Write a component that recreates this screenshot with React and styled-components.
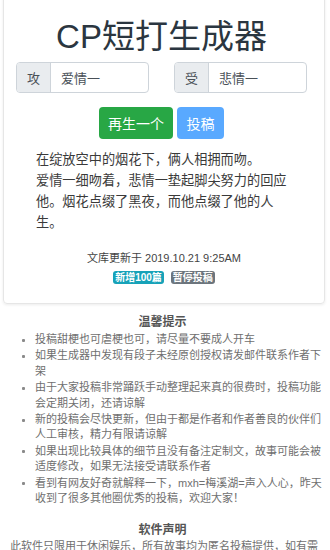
import React from 'react'
import styled, { createGlobalStyle } from 'styled-components'

const GlobalStyle = createGlobalStyle`
  html, body {
    margin: 0;
    padding: 0;
    background: #fff;
    font-family: "Liberation Sans", "Noto Sans CJK SC", sans-serif;
    overflow: hidden;
  }
`

const Page = styled.div`
  width: 330px;
  height: 550px;
  overflow: hidden;
  box-sizing: border-box;
  padding: 0 5px 0 3px;
`

const Card = styled.div`
  margin-top: -6px;
  border: 1px solid #e6e6e6;
  border-radius: 4px;
  box-shadow: 0 1px 3px rgba(0, 0, 0, 0.08);
  padding: 22px 0 19px;
  display: flex;
  flex-direction: column;
`

const Title = styled.h1`
  margin: 0;
  font-size: 33px;
  line-height: 40px;
  font-weight: 400;
  color: #2b3640;
  text-align: center;
  padding-right: 5px;
`

const Pair = styled.div`
  display: grid;
  grid-template-columns: 1fr 1fr;
  column-gap: 25px;
  padding: 0 17px 0 12px;
  margin-top: 5px;
`

const Group = styled.div`
  display: flex;
  height: 31px;
  box-sizing: border-box;
  border: 1px solid #ced4da;
  border-radius: 4px;
  overflow: hidden;
`

const Addon = styled.span`
  width: 33px;
  display: flex;
  align-items: center;
  justify-content: center;
  background: #e9ecef;
  border-right: 1px solid #ced4da;
  font-size: 13px;
  color: #495057;
`

const Field = styled.span`
  flex: 1;
  display: flex;
  align-items: center;
  padding-left: 10px;
  font-size: 13px;
  color: #495057;
`

const Actions = styled.div`
  display: flex;
  justify-content: center;
  gap: 4px;
  margin-top: 14px;
  padding-right: 5px;
`

const Button = styled.button`
  height: 32px;
  border: none;
  border-radius: 4px;
  padding: 0 ${p => p.$pad}px;
  font-family: "Liberation Sans", "Noto Sans CJK SC", sans-serif;
  font-size: 14px;
  color: #fff;
  background: ${p => p.$bg};
`

const Story = styled.p`
  margin: 10px 32px 0;
  font-size: 13.2px;
  line-height: 21px;
  color: #3a3a3a;
`

const Updated = styled.div`
  margin-top: 17px;
  text-align: center;
  font-size: 11px;
  line-height: 16px;
  color: #444;
`

const Badges = styled.div`
  display: flex;
  justify-content: center;
  gap: 7px;
  margin-top: 5px;
`

const Badge = styled.span`
  display: inline-block;
  padding: 0 2px;
  height: 13px;
  line-height: 13px;
  border-radius: 3px;
  font-size: 10px;
  font-weight: 700;
  color: #fff;
  background: ${p => p.$bg};
`

const Notes = styled.div`
  padding: 0 0 0 7px;
`

const Heading = styled.div`
  text-align: center;
  font-size: 12px;
  font-weight: 700;
  line-height: 16px;
  color: #555;
  padding-right: 10px;
  margin-top: ${p => p.$top}px;
`

const List = styled.ul`
  margin: 2px 0 0;
  padding-left: 25px;
  list-style: none;
`

const Item = styled.li`
  position: relative;
  font-size: 11px;
  line-height: 15.3px;
  color: #6f6f6f;
  margin-bottom: 1.2px;

  &::before {
    content: '';
    position: absolute;
    left: -13px;
    top: 6.5px;
    width: 3px;
    height: 3px;
    border-radius: 1px;
    background: #8a8a8a;
  }
`

const Disclaimer = styled.p`
  margin: 1px 0 0;
  font-size: 11px;
  line-height: 15.3px;
  color: #6f6f6f;
`

const tips = [
  '投稿甜梗也可虐梗也可，请尽量不要成人开车',
  '如果生成器中发现有段子未经原创授权请发邮件联系作者下架',
  '由于大家投稿非常踊跃手动整理起来真的很费时，投稿功能会定期关闭，还请谅解',
  '新的投稿会尽快更新，但由于都是作者和作者善良的伙伴们人工审核，精力有限请谅解',
  '如果出现比较具体的细节且没有备注定制文，故事可能会被适度修改，如果无法接受请联系作者',
  '看到有网友好奇就解释一下，mxh=梅溪湖=声入人心，昨天收到了很多其他圈优秀的投稿，欢迎大家！',
]

export default function App() {
  return (
    <Page>
      <GlobalStyle />
      <Card>
        <Title>CP短打生成器</Title>
        <Pair>
          <Group>
            <Addon>攻</Addon>
            <Field>爱情一</Field>
          </Group>
          <Group>
            <Addon>受</Addon>
            <Field>悲情一</Field>
          </Group>
        </Pair>
        <Actions>
          <Button $bg="#28a745" $pad={9}>再生一个</Button>
          <Button $bg="#59a9ff" $pad={9.5}>投稿</Button>
        </Actions>
        <Story>
          在绽放空中的烟花下，俩人相拥而吻。<br />
          爱情一细吻着，悲情一垫起脚尖努力的回应他。烟花点缀了黑夜，而他点缀了他的人生。
        </Story>
        <Updated>文库更新于 2019.10.21 9:25AM</Updated>
        <Badges>
          <Badge $bg="#17a2b8">新增100篇</Badge>
          <Badge $bg="#6c757d">暂停投稿</Badge>
        </Badges>
      </Card>
      <Notes>
        <Heading $top={10}>温馨提示</Heading>
        <List>
          {tips.map(t => <Item key={t}>{t}</Item>)}
        </List>
        <Heading $top={16}>软件声明</Heading>
        <Disclaimer>此软件只限用于休闲娱乐，所有故事均为匿名投稿提供，如有需要请联系作者。</Disclaimer>
      </Notes>
    </Page>
  )
}
